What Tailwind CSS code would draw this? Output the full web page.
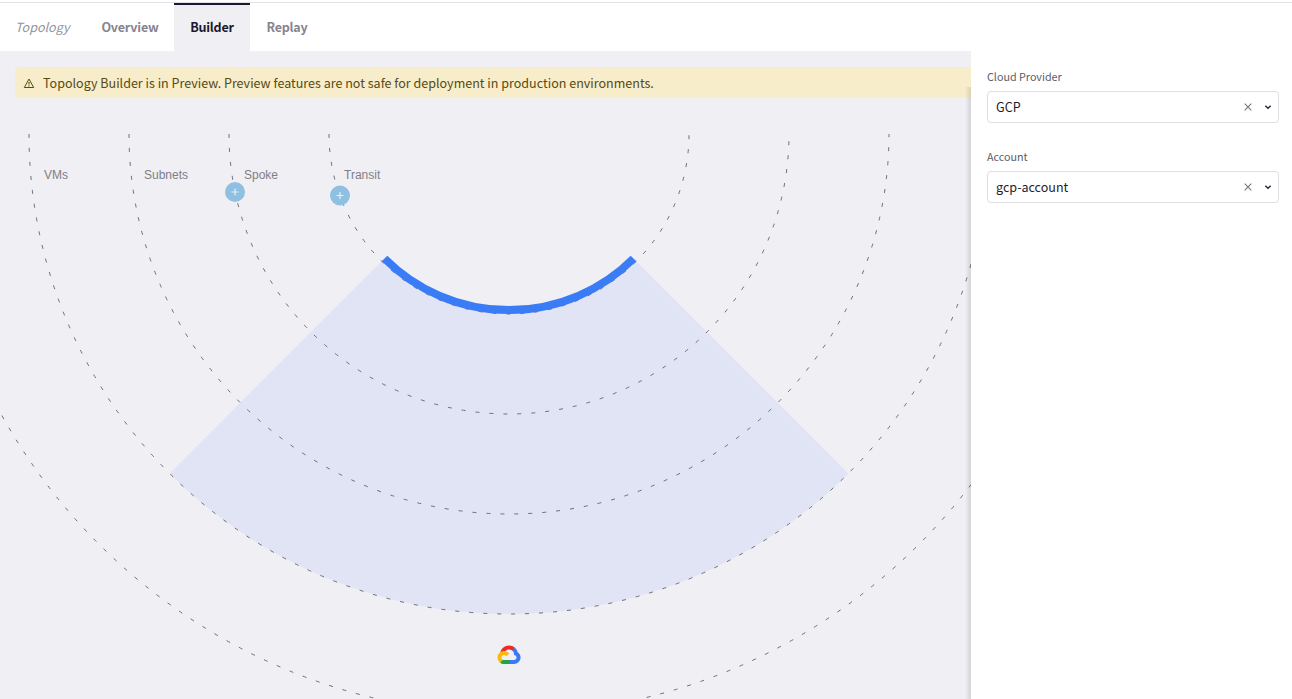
<!DOCTYPE html>
<html lang="en">
<head>
<meta charset="utf-8">
<title>Topology Builder</title>
<script src="https://cdn.jsdelivr.net/npm/@tailwindcss/browser@4"></script>
</head>
<body class="h-screen overflow-hidden bg-white font-['Noto_Sans_CJK_SC','Open_Sans',sans-serif] text-[12.54px] leading-5">
<div class="flex h-[699px] w-[1292px] flex-col overflow-hidden">
  <header class="mt-0.5 flex h-[49px] shrink-0 border-t border-[#e2e2e7] font-bold tracking-[-0.2px] text-[#868491]">
    <div class="w-[86px] pt-[14px] pl-[15px] font-normal tracking-normal text-[#93929b] italic">Topology</div>
    <a class="w-[88px] pt-[14px] text-center">Overview</a>
    <a class="w-[76px] border-t-2 border-[#1c1930] bg-[#f0eff4] pt-3 text-center text-[#1c1930]">Builder</a>
    <a class="w-[74px] pt-[14px] text-center">Replay</a>
  </header>
  <div class="flex min-h-0 flex-1">
    <main class="relative w-[971px] shrink-0 overflow-hidden bg-[#f0eff4] pt-4 pl-[15px]">
      <div class="flex h-[31px] items-center gap-2 rounded-l bg-[#f7edca] pl-2 text-[#594a11]">
        <svg class="h-3 w-3" viewBox="0 0 12 12" fill="none" stroke="currentColor"><path d="M6 2 10.700 10.500H1.300Z" stroke-width="1"/><path d="M6 5v2.400M6 8.200v1.200" stroke-width="1.1"/></svg>
        <span>Topology Builder is in Preview. Preview features are not safe for deployment in production environments.</span>
      </div>
      <svg class="absolute top-0 left-0 h-[648px] w-[971px]" viewBox="0 51 971 648">
        <path d="M169.6 473.4A480 480 0 0 0 848.4 473.4L636.3 261.3A180 180 0 0 1 381.7 261.3Z" fill="#e0e4f5"/>
        <g fill="none" stroke="#6f6e77" stroke-dasharray="4 10">
          <path d="M329 134a180 180 0 0 0 360 0"/>
          <path d="M229 134a280 280 0 0 0 560 0"/>
          <path d="M129 134a380 380 0 0 0 760 0"/>
          <path d="M29 134a480 480 0 0 0 960 0"/>
          <path d="M-71 134a580 580 0 0 0 1160 0"/>
        </g>
        <path d="M384.5 258.5A176 176 0 0 0 633.5 258.5" fill="none" stroke="#3a7cf5" stroke-width="8"/>
        <g fill="#7f7e87" class="font-['Liberation_Sans',sans-serif] text-[12px]">
          <text x="44" y="179">VMs</text>
          <text x="144" y="179">Subnets</text>
          <text x="244" y="179">Spoke</text>
          <text x="344" y="179">Transit</text>
        </g>
        <g fill="#8fc0e2"><circle cx="235" cy="192" r="10"/><circle cx="340" cy="195.5" r="10"/></g>
        <path d="M231.5 192h7M235 188.500v7M336.500 195.500h7M340 192v7" stroke="#e4f0f8" stroke-width="1.2"/>
        <g transform="translate(497.500 645.500) scale(.0902)">
          <path fill="#f02b24" d="M170.252 56.819 192.505 34.566 193.988 25.197C153.437-11.677 88.976-7.496 52.421 33.920 42.267 45.423 34.734 59.764 30.717 74.573L38.687 73.450 83.192 66.111 86.628 62.597C106.425 40.855 139.898 37.930 162.756 56.429Z"/>
          <path fill="#397bf4" d="M224.205 73.918C219.090 55.082 208.589 38.149 193.988 25.196L162.756 56.428C175.944 67.204 183.457 83.438 183.135 100.465V106.009C198.486 106.009 210.932 118.454 210.932 133.805 210.932 149.157 198.486 161.290 183.135 161.290H127.464L121.998 167.224V200.564L127.464 205.795H183.135C223.065 206.106 255.687 174.301 255.998 134.371 256.186 110.168 244.253 87.478 224.205 73.918"/>
          <path fill="#1fa446" d="M71.870 205.796H127.463V161.290H71.870C67.909 161.289 64.073 160.438 60.471 158.792L52.584 161.212 30.175 183.465 28.223 191.039C40.790 200.528 56.123 205.864 71.870 205.796"/>
          <path fill="#fdb90a" d="M71.870 61.426C31.939 61.664-.237 94.228.001 134.158.134 156.456 10.548 177.446 28.223 191.039L60.471 158.792C46.480 152.471 40.263 136.006 46.584 122.016 52.904 108.026 69.370 101.809 83.359 108.129 89.524 110.914 94.461 115.852 97.246 122.016L129.494 89.768C115.773 71.832 94.453 61.345 71.870 61.426"/>
        </g>
      </svg>
      <div class="absolute top-9 right-0 bottom-0 w-[6px] bg-linear-to-r from-black/0 to-black/12"></div>
    </main>
    <aside class="flex-1 bg-white pt-4 pr-[13px] pl-4">
      <label class="block text-[10.75px] text-[#5e5d68]">Cloud Provider</label>
      <div class="mt-1 flex h-8 items-center rounded border border-[#dedee3] pr-1.5 pl-2 text-[#1f1d2b]">
        <span class="flex-1">GCP</span>
        <svg class="mr-3 h-2 w-2" viewBox="0 0 8 8" stroke="#777681" stroke-width="1.1"><path d="M.7.7 7.300 7.300M7.300.7.7 7.300"/></svg>
        <svg class="h-2 w-2" viewBox="0 0 8 8" fill="none" stroke="#2b2938" stroke-width="1.5"><path d="M1.300 2.700 4 5.200 6.700 2.700"/></svg>
      </div>
      <label class="mt-6 block text-[10.75px] text-[#5e5d68]">Account</label>
      <div class="mt-1 flex h-8 items-center rounded border border-[#dedee3] pr-1.5 pl-2 text-[#1f1d2b]">
        <span class="flex-1">gcp-account</span>
        <svg class="mr-3 h-2 w-2" viewBox="0 0 8 8" stroke="#777681" stroke-width="1.1"><path d="M.7.7 7.300 7.300M7.300.7.7 7.300"/></svg>
        <svg class="h-2 w-2" viewBox="0 0 8 8" fill="none" stroke="#2b2938" stroke-width="1.5"><path d="M1.300 2.700 4 5.200 6.700 2.700"/></svg>
      </div>
    </aside>
  </div>
</div>
</body>
</html>
